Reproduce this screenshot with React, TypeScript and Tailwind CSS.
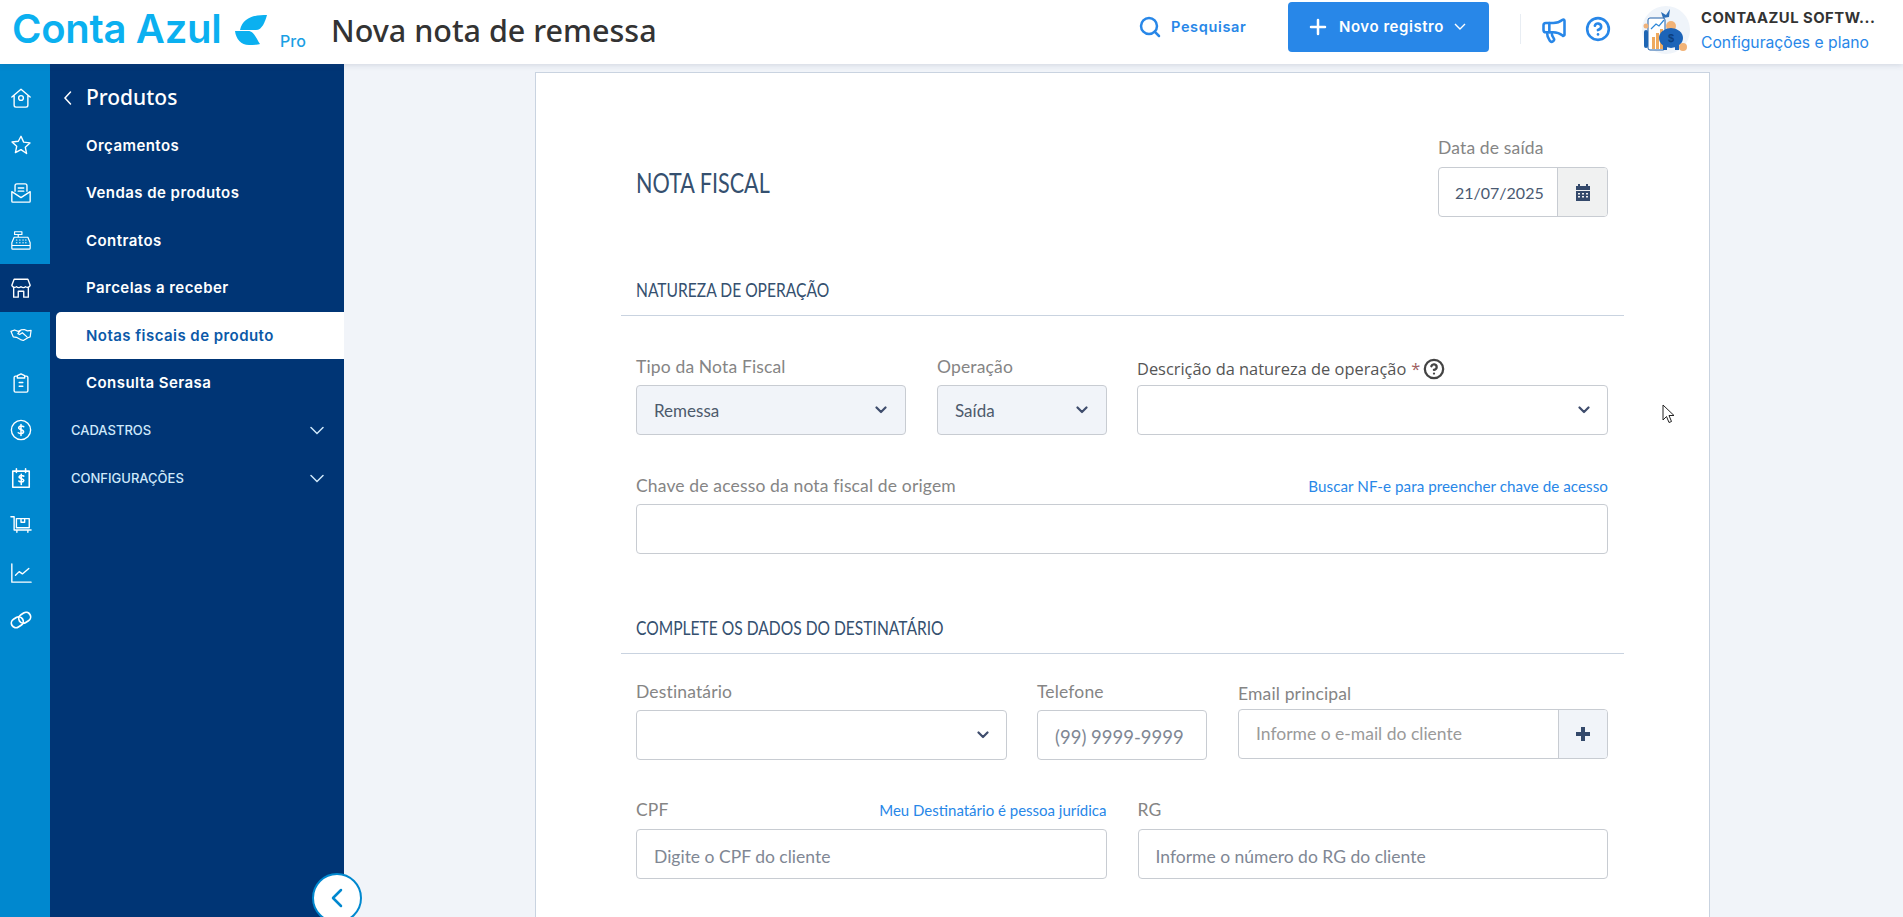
import React from 'react';
import { CircleHelp, Megaphone, Plus, Search } from 'lucide-react';

const sans = "font-['Lato','Open_Sans',sans-serif]";
const mont = "font-['Inter','Noto_Sans',sans-serif]";

function RailIcon({ children }: { children: React.ReactNode }) {
    return (
        <svg width="22" height="22" viewBox="0 0 24 24" fill="none" stroke="#fff" strokeWidth="1.500" strokeLinecap="round" strokeLinejoin="round">
            {children}
        </svg>
    );
}

const railIcons = [
    <RailIcon key="home"><path d="M2 11 12 2.500 22 11M4.500 9.500V20a2 2 0 0 0 2 2h11a2 2 0 0 0 2-2V9.500" /><circle cx="12" cy="12" r="2.600" /></RailIcon>,
    <RailIcon key="star"><path d="m12 2.500 2.900 6.400 6.900.8-5.100 4.700 1.400 6.900L12 17l-6.100 3.300 1.400-6.900-5.100-4.700 6.900-.8z" /></RailIcon>,
    <RailIcon key="inbox"><path d="M5.500 10V4a2 2 0 0 1 2-2h9a2 2 0 0 1 2 2v6M2 10.500V21a1 1 0 0 0 1 1h18a1 1 0 0 0 1-1V10.500L12 17zM9 6.500h6M9 10h6" /></RailIcon>,
    <RailIcon key="register"><path d="M5 5V3h8v3H5zM9 6v3M4.500 9h15L22 15v6a1 1 0 0 1-1 1H3a1 1 0 0 1-1-1v-6zM2 18h20M7 12h.5M10.500 12h.5M14 12h.5M17 12h.5M7 15h.5M10.500 15h.5M14 15h.5M17 15h.5" strokeWidth="1.300" /></RailIcon>,
    <RailIcon key="store"><path d="M4.500 2.500h15L22 9a3 3 0 0 1-5 1.500 3.400 3.400 0 0 1-5 0 3.400 3.400 0 0 1-5 0A3 3 0 0 1 2 9zM4 12v10h5v-6.500h6V22h5V12" /></RailIcon>,
    <RailIcon key="hands"><path d="M1 8l4-1.500 4 1.500 3-1.500 3.500-.5 3.500 1.500 4-.5-1 7-2.500 1-5 3-3-1-4.500-2.500-3.500-.5zM12 6.500 8.500 10.500l2 1 3-2 5 4.500" strokeWidth="1.300" /></RailIcon>,
    <RailIcon key="clip"><path d="M8 4.500H6a1.500 1.500 0 0 0-1.500 1.500v14.500A1.500 1.500 0 0 0 6 22h12a1.500 1.500 0 0 0 1.500-1.500V6A1.500 1.500 0 0 0 18 4.500h-2M8 6.500V4l4-2 4 2v2.500zM10 11.500h4M10 15.500h4" /></RailIcon>,
    <RailIcon key="money"><circle cx="12" cy="12" r="10.500" /><path d="M15 8.500c-1-1-4.800-1.500-5.500.8-.8 3 5.800 2 5.300 5-.4 2.200-4.300 2-5.800.7M12 6v12" strokeWidth="1.700" /></RailIcon>,
    <RailIcon key="bill"><path d="M7 2v4M17 2v4M3 4.500h18V22H3zM15 10c-1-1-4.500-1.200-5 .7-.7 2.500 5.400 1.600 5 4.100-.3 1.900-4 1.700-5.300.6M12.300 8v11" strokeWidth="1.700" /></RailIcon>,
    <RailIcon key="cart"><path d="M1 3h3.500v14.500H23M7 5h14v10H7zM12 5v4h4V5M7.500 18v2M19.500 18v2" /></RailIcon>,
    <RailIcon key="chart"><path d="M2 2v20h21M6 14.500l4-4 3.500 2.500 7-6" /></RailIcon>,
    <RailIcon key="link"><g transform="rotate(-32 12 12)" strokeWidth="1.900"><rect x="0.500" y="7" width="13.500" height="10" rx="5" /><rect x="10" y="7" width="13.500" height="10" rx="5" /></g></RailIcon>,
];

function Chevron({ color = '#3f4d6d' }: { color?: string }) {
    return (
        <svg width="12" height="8" viewBox="0 0 12 8" fill="none" stroke={color} strokeWidth="2.200" strokeLinecap="round" strokeLinejoin="round">
            <path d="m1.500 1.500 4.500 4.500 4.500-4.500" />
        </svg>
    );
}

function Label({ children, className = '' }: { children: React.ReactNode; className?: string }) {
    return <div className={`h-[18px] leading-[18px] text-[17.500px] tracking-[0.150px] text-[#858585] whitespace-nowrap ${sans} ${className}`}>{children}</div>;
}

function SelectBox({ value, gray, chevronRight = 'mr-[18px]' }: { value?: string; gray?: boolean; chevronRight?: string }) {
    return (
        <div className={`h-[50px] rounded-[4px] border border-[#c8ccd2] flex items-center justify-between pl-[17px] ${gray ? 'bg-[#f1f4f9]' : 'bg-white'}`}>
            <span className={`pt-[2px] text-[17px] text-[#4d5a6c] ${sans}`}>{value}</span>
            <span className={`flex ${chevronRight}`}><Chevron /></span>
        </div>
    );
}

function TextInput({ placeholder, className = '' }: { placeholder?: string; className?: string }) {
    return (
        <input
            readOnly
            placeholder={placeholder}
            className={`w-full h-[50px] rounded-[4px] border border-[#c8ccd2] bg-white pl-[17px] pt-[4px] text-[17.500px] outline-none placeholder:text-[#808794] ${sans} ${className}`}
        />
    );
}

function SectionTitle({ children }: { children: React.ReactNode }) {
    return (
        <div className="-ml-[15px] -mr-[16px] h-[39px] border-b border-[#c9d3e0] pl-[15px]">
            <div className="h-[24px] leading-[24px] text-[20px] text-[#35506f] origin-left scale-x-[0.78] whitespace-nowrap font-['Lato',sans-serif]">{children}</div>
        </div>
    );
}

function Logo() {
    return (
        <div className="flex items-start w-[331px] shrink-0 pl-[12px] -mt-[6px]">
            <span className={`text-[40px] leading-[58px] font-semibold text-[#0bb0f0] tracking-[-0.300px] whitespace-nowrap w-[223px] ${mont}`}>Conta Azul</span>
            <svg className="mt-[15px] shrink-0" width="32" height="30" viewBox="0 0 32 30" fill="#0bb0f0">
                <path d="M32 0C22 0 8 1 5 15h16c6 0 9-8 11-15z" />
                <path d="M0 16h13c6 0 8 7 12 13-1 .5-7 1-11 1C6 30 1 24 0 16z" />
            </svg>
            <span className={`ml-[13px] mt-[31px] text-[16px] leading-[20px] font-medium text-[#1b9fe4] ${mont}`}>Pro</span>
        </div>
    );
}

function Avatar() {
    return (
        <svg className="ml-[30px] shrink-0" width="50" height="50" viewBox="0 0 50 50">
            <circle cx="25" cy="25" r="24" fill="#eff4fa" />
            <rect x="7" y="13" width="17" height="32" rx="2" fill="#fff" stroke="#1f5ea8" strokeWidth="1" />
            <rect x="11" y="32" width="3" height="12" fill="#efaa5f" />
            <rect x="15" y="28" width="3" height="16" fill="#efaa5f" />
            <rect x="19" y="24" width="3" height="20" fill="#efaa5f" />
            <path d="M10 24l5-5 3 2 5-6" fill="none" stroke="#2d87d8" strokeWidth="1.200" />
            <rect x="3" y="25" width="4" height="18" rx="2" fill="#1f66b4" />
            <circle cx="5" cy="21" r="2.500" fill="#f0b27a" />
            <circle cx="30" cy="21" r="5" fill="#f2b377" />
            <ellipse cx="30" cy="33" rx="12" ry="10" fill="#1d64b8" />
            <rect x="22" y="40" width="4" height="5" fill="#1d64b8" />
            <rect x="34" y="40" width="4" height="5" fill="#1d64b8" />
            <circle cx="42" cy="42" r="4" fill="#f2b377" />
            <path d="M20 7l5 3 4-6-1 8-6 1z" fill="#2d6fb8" />
            <text x="30" y="37" fontSize="11" fontWeight="700" textAnchor="middle" fill="#0c3f7f" fontFamily="Liberation Sans, sans-serif">$</text>
        </svg>
    );
}

function Header() {
    return (
        <header className="relative z-10 h-16 shrink-0 bg-white flex items-center shadow-[0_1px_6px_rgba(60,80,110,0.18)]">
            <Logo />
            <h1 className="text-[30.500px] leading-[58px] -mt-[4px] font-medium text-[#333] w-[807px] shrink-0 whitespace-nowrap font-['Noto_Sans',sans-serif]">Nova nota de remessa</h1>
            <Search className="shrink-0 -mt-[10px]" size={24} color="#2887e8" strokeWidth={2.500} />
            <span className={`ml-[9px] w-[117px] shrink-0 -mt-[10px] text-[14.500px] tracking-[0.650px] font-semibold text-[#2887e8] ${mont}`}>Pesquisar</span>
            <button className={`w-[201px] h-[50px] -mt-[10px] shrink-0 rounded-[4px] bg-[#2887e8] flex items-center text-white pl-[18px] text-[15px] tracking-[0.550px] font-semibold ${mont}`}>
                <Plus size={24} strokeWidth={2.500} />
                <span className="ml-[9px] w-[115px] text-left whitespace-nowrap">Novo registro</span>
                <svg width="12" height="8" viewBox="0 0 12 8" fill="none" stroke="#fff" strokeWidth="1.400"><path d="m1 1 5 5 5-5" /></svg>
            </button>
            <div className="ml-[31px] w-px h-[30px] -mt-[6px] bg-[#e8edf3] shrink-0" />
            <Megaphone className="ml-[19px] shrink-0 -mt-[5px]" size={28} color="#2887e8" strokeWidth={2.200} />
            <CircleHelp className="ml-[17px] shrink-0 -mt-[6px]" size={26} color="#2887e8" strokeWidth={2.400} />
            <div className="-mt-[4px] flex items-center">
                <Avatar />
                <div className="ml-[10px] w-[185px]">
                    <div className={`text-[14.800px] leading-[20px] font-bold text-[#333] whitespace-nowrap tracking-[0.500px] ${mont}`}>CONTAAZUL SOFTW...</div>
                    <div className={`mt-[5px] text-[15.700px] leading-[20px] text-[#2887e8] whitespace-nowrap ${mont}`}>Configurações e plano</div>
                </div>
            </div>
        </header>
    );
}

function Sidebar() {
    const items = ['Orçamentos', 'Vendas de produtos', 'Contratos', 'Parcelas a receber'];
    const row = 'h-[47.500px] pl-[30px] pt-[1px] flex items-center text-[15px] font-semibold tracking-[0.450px]';
    return (
        <>
            <aside className="w-[50px] shrink-0 bg-[#0088cf] pt-[10px]">
                {railIcons.map((icon, i) => (
                    <div key={i} className={`h-[47.500px] pl-[10px] flex items-center ${i === 4 ? 'bg-[#003575]' : ''}`}>{icon}</div>
                ))}
            </aside>
            <nav className={`w-[294px] shrink-0 bg-[#003575] pt-[10px] pl-[6px] text-white ${mont}`}>
                <div className="h-[47.500px] flex items-center">
                    <svg className="ml-[7px]" width="9" height="16" viewBox="0 0 9 16" fill="none" stroke="#fff" strokeWidth="1.500" strokeLinecap="round"><path d="M7.500 2 2 8l5.500 6" /></svg>
                    <span className="ml-[14px] text-[21px] font-medium font-['Noto_Sans',sans-serif]">Produtos</span>
                </div>
                {items.map((t) => (
                    <div key={t} className={row}>{t}</div>
                ))}
                <div className={`${row} bg-white text-[#0b59a8] rounded-l-[5px]`}>Notas fiscais de produto</div>
                <div className={row}>Consulta Serasa</div>
                {['CADASTROS', 'CONFIGURAÇÕES'].map((t) => (
                    <div key={t} className="h-[47.500px] pl-[15px] pr-[20px] pt-[1px] flex items-center justify-between text-[13px] font-medium text-[#cfe9fb]">
                        {t}
                        <svg width="14" height="9" viewBox="0 0 14 9" fill="none" stroke="#cfe9fb" strokeWidth="1.500" strokeLinecap="round"><path d="m1 1.500 6 6 6-6" /></svg>
                    </div>
                ))}
            </nav>
        </>
    );
}

function Form() {
    return (
        <section className={`relative w-[1175px] ml-[191px] mt-2 border border-[#c9d3e0] bg-white pl-[100px] pr-[101px] pt-[66px] pb-10 ${sans}`}>
            <div className="flex justify-between">
                <h2 className="self-center pt-[10px] text-[26px] text-[#35506f] origin-left scale-x-[0.83] whitespace-nowrap font-['Lato',sans-serif]">NOTA FISCAL</h2>
                <div className="w-[170px]">
                    <Label className="mb-[10px]">Data de saída</Label>
                    <div className="h-[50px] flex rounded-[4px] border border-[#c8ccd2] overflow-hidden">
                        <div className={`w-[118px] flex items-center pl-[16px] pt-[2px] text-[16px] text-[#4a5a72] ${sans}`}>21/07/2025</div>
                        <div className="flex-1 bg-[#f0f1f1] border-l border-[#c8ccd2] flex items-center justify-center">
                            <svg width="16" height="17" viewBox="0 0 16 17" fill="#34496b">
                                <rect x="3" width="2" height="3" /><rect x="11" width="2" height="3" />
                                <path d="M1 2h14v4H1z" />
                                <path d="M1 7h14v10H1zM3 9v1.500h2V9zm4 0v1.500h2V9zm4 0v1.500h2V9zm-8 3v1.500h2V12zm4 0v1.500h2V12zm4 0v1.500h2V12z" fillRule="evenodd" />
                            </svg>
                        </div>
                    </div>
                </div>
            </div>

            <div className="mt-[60px]"><SectionTitle>NATUREZA DE OPERAÇÃO</SectionTitle></div>

            <div className="mt-[42px] flex gap-[31px]">
                <div className="w-[270px]">
                    <Label className="mb-[9px]">Tipo da Nota Fiscal</Label>
                    <SelectBox value="Remessa" gray />
                </div>
                <div className="w-[170px]">
                    <Label className="mb-[9px]">Operação</Label>
                    <SelectBox value="Saída" gray />
                </div>
                <div className="flex-1 -ml-[1px]">
                    <div className="mt-[2px] mb-[7px] h-[18px] flex items-center text-[16.400px] text-[#555] font-['Open_Sans',sans-serif] whitespace-nowrap">
                        Descrição da natureza de operação <span className="ml-[5px] text-[#a06060]">*</span>
                        <CircleHelp className="ml-[3px]" size={22} color="#444" strokeWidth={2.500} />
                    </div>
                    <SelectBox chevronRight="mr-[17px]" />
                </div>
            </div>

            <div className="mt-[42px]">
                <div className="mb-[9px] h-[18px] flex justify-between items-center">
                    <Label>Chave de acesso da nota fiscal de origem</Label>
                    <a className="text-[15.200px] leading-[18px] tracking-[0.050px] text-[#2887e8]">Buscar NF-e para preencher chave de acesso</a>
                </div>
                <TextInput />
            </div>

            <div className="mt-[61px]"><SectionTitle>COMPLETE OS DADOS DO DESTINATÁRIO</SectionTitle></div>

            <div className="mt-[29px] flex gap-[30px] items-start">
                <div className="w-[371px]">
                    <Label className="mb-[9px]">Destinatário</Label>
                    <SelectBox chevronRight="mr-[17px]" />
                </div>
                <div className="w-[170px]">
                    <Label className="mb-[9px]">Telefone</Label>
                    <TextInput placeholder="(99) 9999-9999" className="text-[18.500px]" />
                </div>
                <div className="flex-1 mt-[2px] pl-[1px]">
                    <Label className="mb-[6px]">Email principal</Label>
                    <div className="flex h-[50px] rounded-[4px] border border-[#c8ccd2] overflow-hidden">
                        <input readOnly placeholder="Informe o e-mail do cliente" className={`flex-1 min-w-0 pl-[17px] text-[17.500px] outline-none placeholder:text-[#9a9a9a] ${sans}`} />
                        <div className="w-[49px] bg-[#f1f4f9] border-l border-[#c8ccd2] flex items-center justify-center">
                            <svg width="14" height="14" viewBox="0 0 14 14" fill="#34496b"><path d="M5 0h4v5h5v4H9v5H5V9H0V5h5z" /></svg>
                        </div>
                    </div>
                </div>
            </div>

            <div className="mt-[41px] flex gap-[31px]">
                <div className="flex-1">
                    <div className="mb-[10px] h-[18px] flex justify-between items-center">
                        <Label>CPF</Label>
                        <a className="text-[15px] leading-[18px] text-[#2887e8]">Meu Destinatário é pessoa jurídica</a>
                    </div>
                    <TextInput placeholder="Digite o CPF do cliente" />
                </div>
                <div className="flex-1">
                    <Label className="mb-[10px]">RG</Label>
                    <TextInput placeholder="Informe o número do RG do cliente" />
                </div>
            </div>
        </section>
    );
}

export default function App() {
    return (
        <div className="relative h-[917px] overflow-hidden flex flex-col bg-[#f1f4f9]">
            <Header />
            <div className="flex-1 flex min-h-0">
                <Sidebar />
                <main className="flex-1 min-w-0 overflow-hidden"><Form /></main>
            </div>
            {/* Collapse toggle over the sidebar edge */}
            <button className="absolute left-[312px] top-[873px] w-[50px] h-[50px] rounded-full bg-white border-2 border-[#0088cf] flex items-center justify-center">
                <svg width="12" height="20" viewBox="0 0 12 20" fill="none" stroke="#0088cf" strokeWidth="2.500" strokeLinecap="round" strokeLinejoin="round"><path d="M10 2 2 10l8 8" /></svg>
            </button>
            {/* Mouse pointer */}
            <svg className="absolute left-[1662px] top-[404px]" width="13" height="20" viewBox="0 0 13 20" fill="#fff" stroke="#222" strokeWidth="1"><path d="M1 1v15l3.500-3.500 2.500 6 2.500-1-2.500-6H12z" /></svg>
        </div>
    );
}
